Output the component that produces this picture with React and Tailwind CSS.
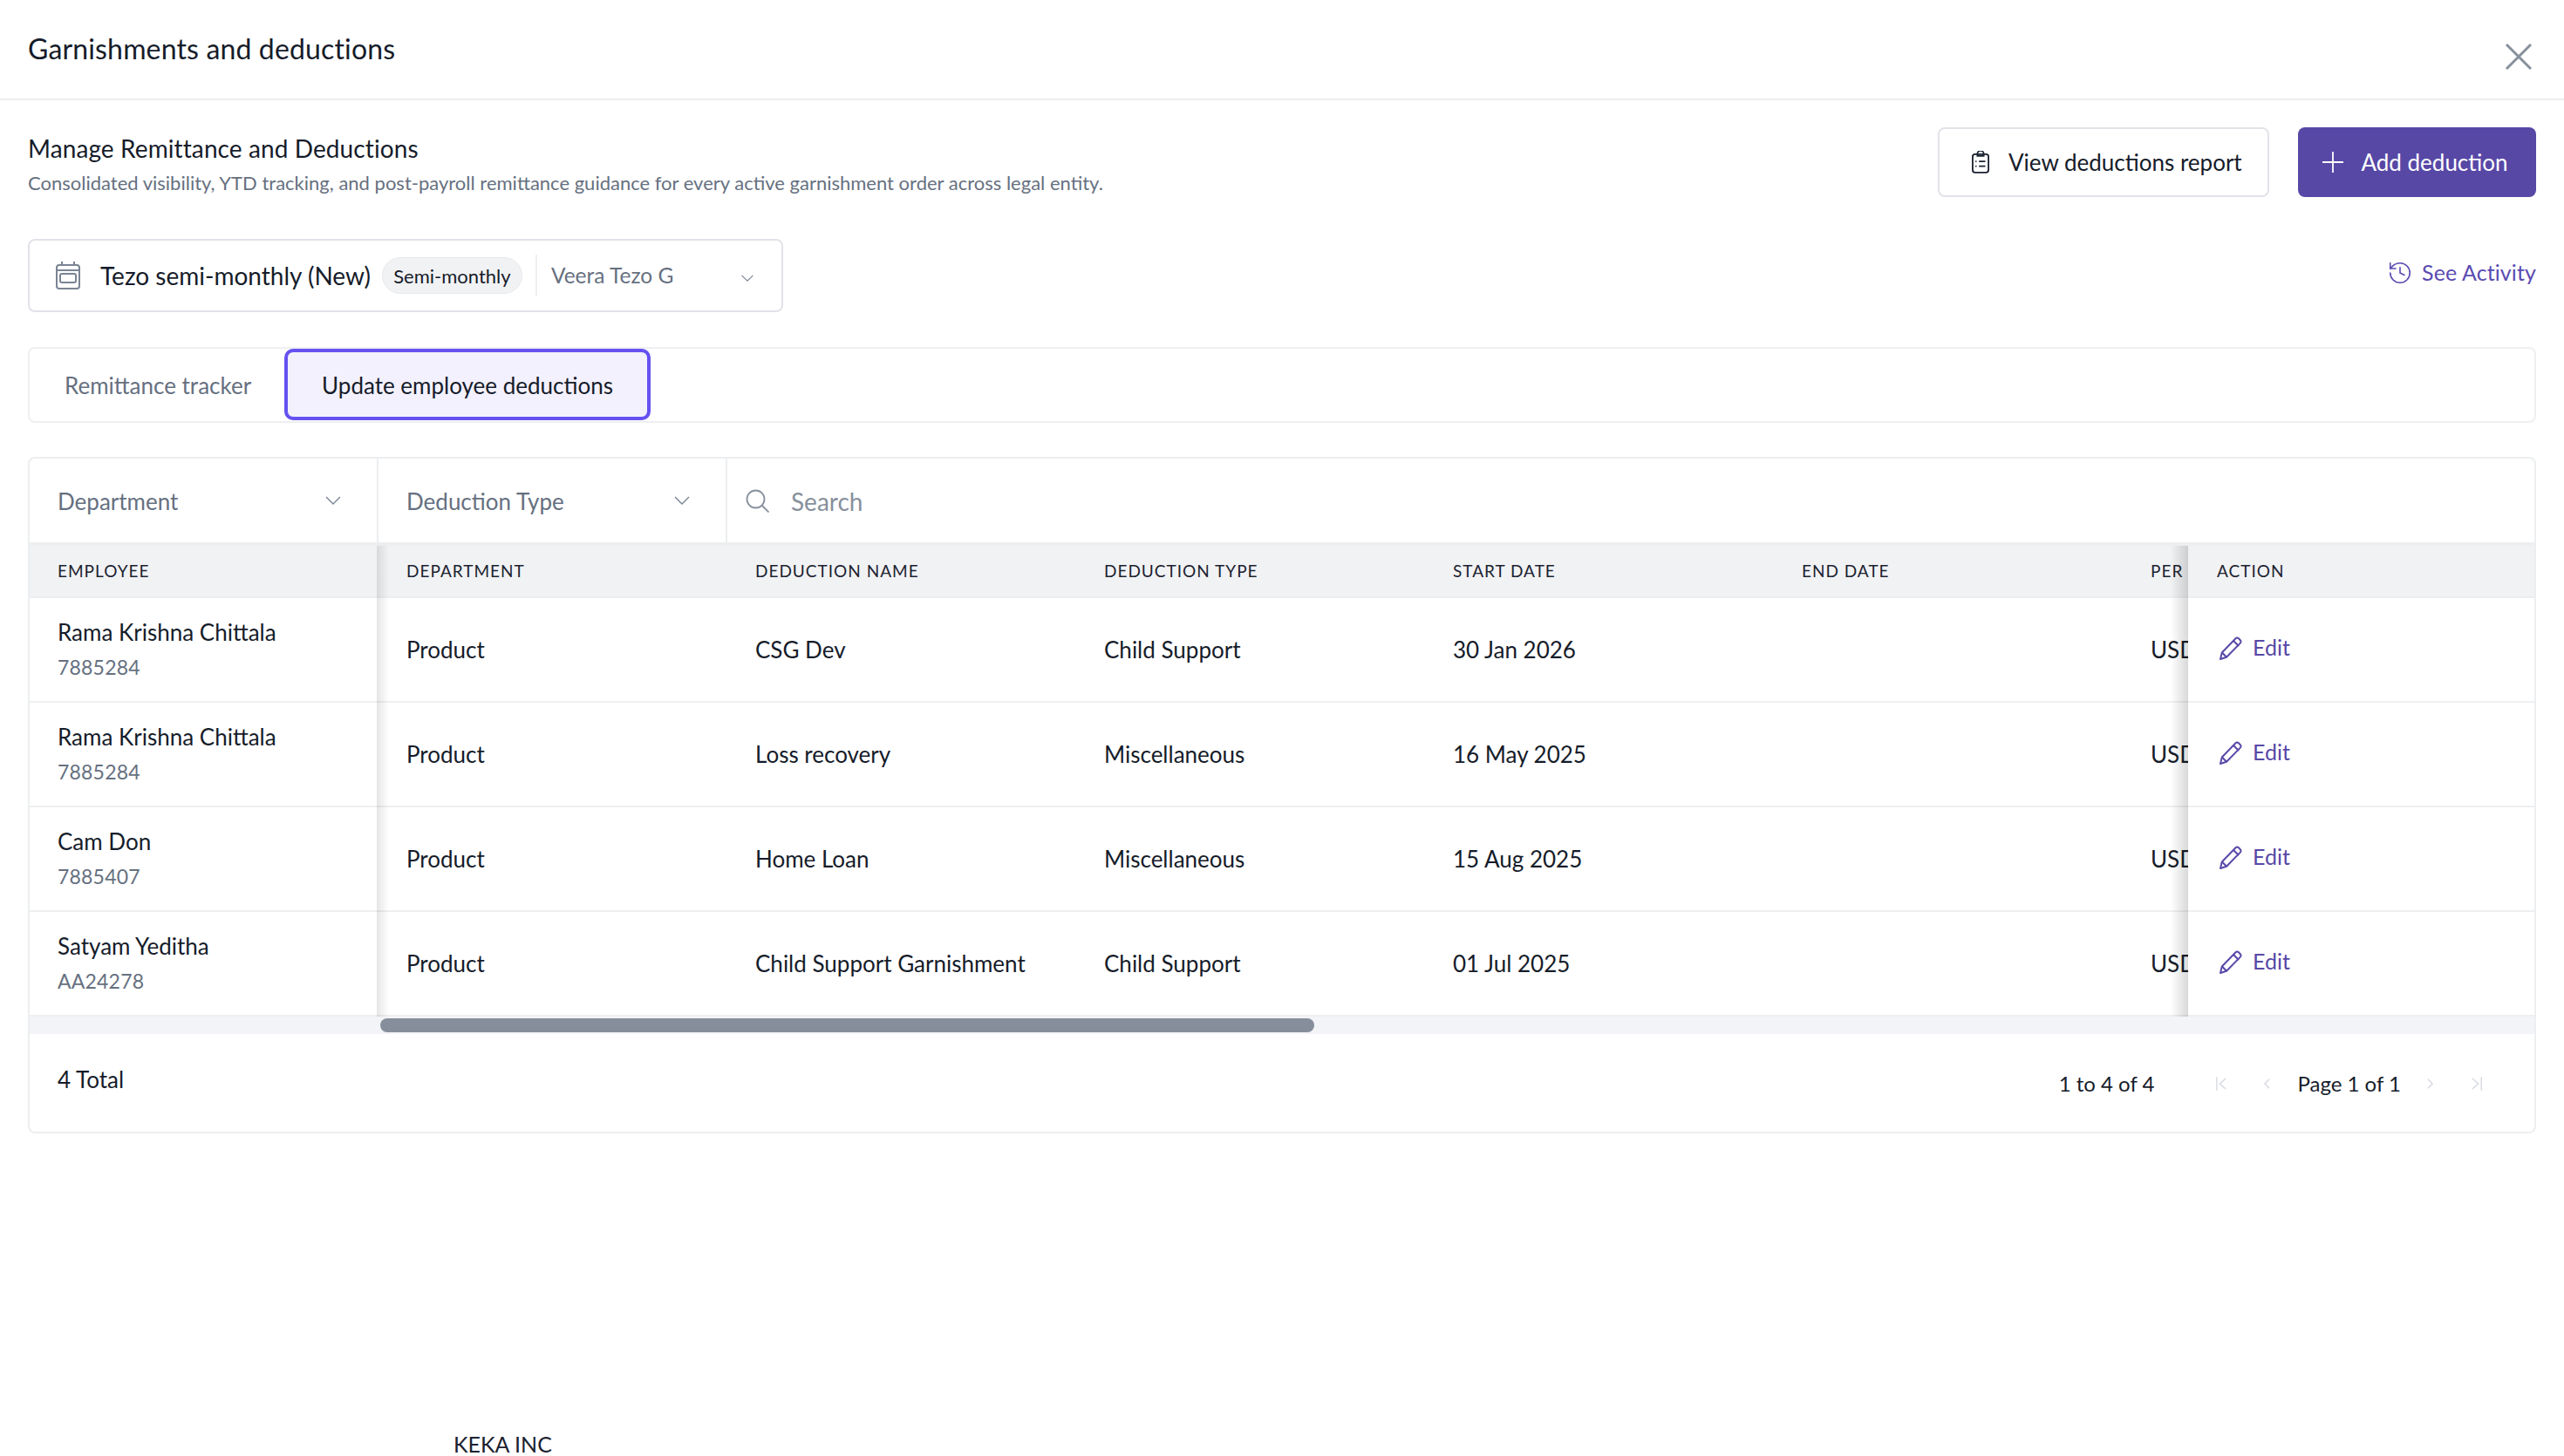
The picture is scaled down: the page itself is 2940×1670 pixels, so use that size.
import React from "react";
import { History } from "lucide-react";

const rows = [
  { name: "Rama Krishna Chittala", id: "7885284", deduction: "CSG Dev", type: "Child Support", start: "30 Jan 2026" },
  { name: "Rama Krishna Chittala", id: "7885284", deduction: "Loss recovery", type: "Miscellaneous", start: "16 May 2025" },
  { name: "Cam Don", id: "7885407", deduction: "Home Loan", type: "Miscellaneous", start: "15 Aug 2025" },
  { name: "Satyam Yeditha", id: "AA24278", deduction: "Child Support Garnishment", type: "Child Support", start: "01 Jul 2025" },
];

const columns = ["DEPARTMENT", "DEDUCTION NAME", "DEDUCTION TYPE", "START DATE", "END DATE", "PER"];

function Chevron({ className }) {
  return (
    <svg viewBox="0 0 18 10" fill="none" stroke="currentColor" strokeWidth="1.4" className={className}>
      <path d="M1 1l8 8 8-8" />
    </svg>
  );
}

function PencilIcon() {
  return (
    <svg viewBox="0 0 26 27" fill="none" stroke="#5a48a8" strokeWidth="2" strokeLinejoin="round" className="w-[26px] h-[27px] shrink-0">
      <path d="M1 26l1.8-7.5L18.5 2.2a2.4 2.4 0 0 1 3.4 0l1.9 2a2.4 2.4 0 0 1 0 3.4L8 23.8 1 26z" />
      <path d="M16 5l6 6M3 18.5l5 5.3" />
    </svg>
  );
}

function HeaderCell({ children, className = "" }) {
  return (
    <div className={`h-[60px] shrink-0 flex items-center bg-[#f1f2f4] border-b-2 border-[#eceef0] text-[19px] tracking-[1px] text-[#1b2230] ${className}`}>
      {children}
    </div>
  );
}

export default function App() {
  return (
    <div className="h-[1670px] flex flex-col bg-white overflow-hidden text-[#161c2a] font-['Lato','Open_Sans',sans-serif]">
      {/* Title bar */}
      <div className="h-[115px] shrink-0 px-8 flex justify-between border-b-2 border-[#eeeff1]">
        <h1 className="mt-[38px] text-[32px] leading-[36px] tracking-[0.15px] font-normal">Garnishments and deductions</h1>
        <svg viewBox="0 0 32 32" fill="none" stroke="#87909c" strokeWidth="3" className="w-[32px] h-[32px] mt-[49px] mr-[4px]">
          <path d="M2 2l28 28M30 2L2 30" />
        </svg>
      </div>

      <div className="px-8 flex flex-col">
        {/* Heading and actions */}
        <div className="mt-[31px] h-[80px] flex justify-between">
          <div>
            <div className="mt-[8px] text-[28px] leading-[32px] tracking-[0.1px]">Manage Remittance and Deductions</div>
            <div className="mt-[10px] text-[22px] leading-[28px] text-[#667080]">
              Consolidated visibility, YTD tracking, and post-payroll remittance guidance for every active garnishment order across legal entity.
            </div>
          </div>
          <div className="flex gap-[33px]">
            <button className="w-[380px] h-[80px] flex items-center pl-[37px] gap-[22px] rounded-lg border-2 border-[#e2e3e9] bg-white text-[26px]">
              <svg viewBox="0 0 22 28" fill="none" stroke="#1b2230" strokeWidth="2" className="w-[20px] h-[26px]">
                <rect x="1" y="4" width="20" height="23" rx="3" />
                <path d="M7 6V3.500a4 4 0 0 1 8 0V6zM9 13h8M9 19h8M4.500 13h1.500M4.500 19h1.500" />
              </svg>
              View deductions report
            </button>
            <button className="w-[273px] h-[80px] flex items-center justify-center pr-[4px] gap-[20px] rounded-lg bg-[#5748a6] text-white text-[26px]">
              <svg viewBox="0 0 24 24" fill="none" stroke="white" strokeWidth="1.800" className="w-[24px] h-[24px]">
                <path d="M12 0v24M0 12h24" />
              </svg>
              Add deduction
            </button>
          </div>
        </div>

        {/* Payroll selector */}
        <div className="mt-[48px] flex justify-between">
          <div className="w-[866px] h-[84px] flex items-center pl-[30px] rounded-lg border-2 border-[#e2e3e9]">
            <svg viewBox="0 0 28 32" fill="none" stroke="#7a8494" strokeWidth="2" className="w-[28px] h-[32px] shrink-0">
              <rect x="1" y="4" width="26" height="27" rx="3" />
              <path d="M7 0v4M21 0v4M1 10h26" />
              <rect x="5" y="14" width="18" height="10" rx="2" />
            </svg>
            <span className="ml-[23px] text-[28px]">Tezo semi-monthly (New)</span>
            <span className="ml-[13px] h-[42px] w-[161px] shrink-0 flex items-center justify-center rounded-full bg-[#f1f2f4] border border-[#e8e9ed] text-[22px]">
              Semi-monthly
            </span>
            <span className="ml-[15px] w-[2px] h-[48px] bg-[#eeeff1]" />
            <span className="ml-[16px] text-[24.5px] text-[#667080]">Veera Tezo G</span>
            <Chevron className="ml-[77px] mt-[6px] w-[16px] h-[8px] text-[#7a8494]" />
          </div>
          <div className="flex items-center gap-[10px] h-[78px] text-[25px] tracking-[0.1px] text-[#5a4bb0]">
            <History size={30} strokeWidth={1.300} />
            See Activity
          </div>
        </div>

        {/* Tabs */}
        <div className="mt-[40px] h-[87px] flex items-start rounded-lg border-2 border-[#eeeff1]">
          <div className="w-[292px] h-[82px] flex items-center pl-[40px] pt-[2px] text-[26px] text-[#667080]">Remittance tracker</div>
          <div className="w-[420px] h-[82px] flex items-center justify-center pt-[2px] rounded-[10px] border-4 border-[#6552f0] bg-[#f3f1fd] text-[26px]">
            Update employee deductions
          </div>
        </div>

        {/* Table card */}
        <div className="mt-[39px] rounded-lg border-2 border-[#eceef0] text-[26px]">
          <div className="h-[100px] flex border-b-4 border-[#eceef0] text-[#667080]">
            <div className="w-[400px] shrink-0 flex items-center justify-between pl-[32px] pr-[41px] border-r-2 border-[#eceef0]">
              <span className="pt-[2px]">Department</span>
              <Chevron className="w-[18px] h-[10px] text-[#7a8494]" />
            </div>
            <div className="w-[400px] shrink-0 flex items-center justify-between pl-[32px] pr-[41px] border-r-2 border-[#eceef0]">
              <span className="pt-[2px]">Deduction Type</span>
              <Chevron className="w-[18px] h-[10px] text-[#7a8494]" />
            </div>
            <div className="flex-1 flex items-center pl-[21px] gap-[25px]">
              <svg viewBox="0 0 27 27" fill="none" stroke="#87909c" strokeWidth="1.800" className="w-[27px] h-[27px]">
                <circle cx="11.500" cy="11.500" r="10" />
                <path d="M18.500 18.500l8 8" />
              </svg>
              <span className="pt-[2px] text-[28px] text-[#87909c]">Search</span>
            </div>
          </div>

          <div className="flex">
            {/* Pinned employee column */}
            <div className="w-[398px] shrink-0 relative z-10">
              <HeaderCell className="pl-[32px]">EMPLOYEE</HeaderCell>
              {rows.map((row, i) => (
                <div key={i} className="h-[120px] flex flex-col justify-center pl-[32px] border-b-2 border-[#eeeff1] bg-white">
                  <div className="leading-[32px]">{row.name}</div>
                  <div className="mt-[8px] leading-[32px] text-[23px] tracking-[0.2px] text-[#667080]">{row.id}</div>
                </div>
              ))}
              <div className="absolute top-0 bottom-0 left-full w-[14px] bg-gradient-to-r from-black/10 to-transparent" />
            </div>

            {/* Scrolled columns */}
            <div className="flex-1 min-w-0 overflow-hidden">
              <div className="w-[2600px]">
                <div className="flex">
                  {columns.map((c) => (
                    <HeaderCell key={c} className="w-[400px] pl-[34px]">{c}</HeaderCell>
                  ))}
                </div>
                {rows.map((row, i) => (
                  <div key={i} className="h-[120px] flex items-center pt-[1px] border-b-2 border-[#eeeff1]">
                    <div className="w-[400px] pl-[34px]">Product</div>
                    <div className="w-[400px] pl-[34px]">{row.deduction}</div>
                    <div className="w-[400px] pl-[34px]">{row.type}</div>
                    <div className="w-[400px] pl-[34px]">{row.start}</div>
                    <div className="w-[400px] pl-[34px]" />
                    <div className="w-[400px] pl-[34px]">USD</div>
                  </div>
                ))}
              </div>
            </div>

            {/* Pinned action column */}
            <div className="w-[397px] shrink-0 relative z-10">
              <HeaderCell className="pl-[33px]">ACTION</HeaderCell>
              {rows.map((row, i) => (
                <div key={i} className="h-[120px] flex items-center pl-[36px] pb-[4px] gap-[12px] border-b-2 border-[#eeeff1] bg-white text-[25px] text-[#5748a6]">
                  <PencilIcon />
                  Edit
                </div>
              ))}
              <div className="absolute top-0 bottom-0 right-full w-[20px] bg-gradient-to-l from-black/15 to-transparent" />
            </div>
          </div>

          {/* Horizontal scrollbar */}
          <div className="h-[20px] bg-[#f3f4f7] pt-[2px]">
            <div className="ml-[402px] w-[1071px] h-[16px] rounded-full bg-[#868e9c]" />
          </div>

          {/* Pagination */}
          <div className="h-[112px] flex justify-between pl-[32px] pr-[60px]">
            <div className="mt-[36px] leading-[32px]">4 Total</div>
            <div className="mt-[41px] h-[32px] flex items-center leading-[32px] text-[24px]">
              <span>1 to 4 of 4</span>
              <svg viewBox="0 0 14 20" fill="none" stroke="#d4d7de" strokeWidth="1.500" className="ml-[71px] w-[12px] h-[20px]">
                <path d="M1 1v18M13 3l-8 7 8 7" />
              </svg>
              <svg viewBox="0 0 8 14" fill="none" stroke="#d4d7de" strokeWidth="1.500" className="ml-[43px] w-[7px] h-[14px]">
                <path d="M7 1L1 7l6 6" />
              </svg>
              <span className="ml-[31px]">Page 1 of 1</span>
              <svg viewBox="0 0 8 14" fill="none" stroke="#d4d7de" strokeWidth="1.500" className="ml-[30px] w-[7px] h-[14px]">
                <path d="M1 1l6 6-6 6" />
              </svg>
              <svg viewBox="0 0 14 20" fill="none" stroke="#d4d7de" strokeWidth="1.500" className="ml-[44px] w-[12px] h-[20px]">
                <path d="M13 1v18M1 3l8 7-8 7" />
              </svg>
            </div>
          </div>
        </div>
      </div>

      <div className="mt-auto pl-[520px] h-[28px] text-[25px] leading-[28px] text-[#1b2230]">KEKA INC</div>
    </div>
  );
}
